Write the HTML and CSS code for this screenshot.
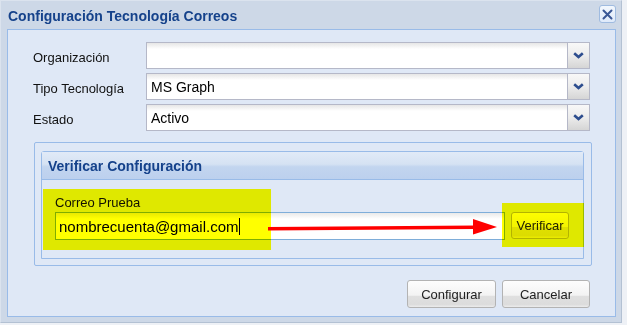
FILE: index.html
```html
<!DOCTYPE html>
<html lang="es">
<head>
<meta charset="utf-8">
<title>Configuración Tecnología Correos</title>
<link rel="stylesheet" href="styles.css">
</head>
<body>
<div class="window">
  <div class="titlebar">
    <span class="title">Configuración Tecnología Correos</span>
    <button class="close" aria-label="Cerrar">
      <svg width="11" height="11" viewBox="0 0 11 11"><path d="M1.5 1.5 L9.5 9.5 M9.5 1.5 L1.5 9.5" stroke="#3a5795" stroke-width="2" fill="none" stroke-linecap="round"/></svg>
    </button>
  </div>
  <div class="wbody">
    <div class="form">
      <label class="lbl">Organización</label>
      <div class="combo"><span class="val"></span><span class="trigger"><svg width="11" height="7" viewBox="0 0 11 7"><path d="M1.2 1.2 L5.5 5 L9.8 1.2" stroke="#2d4d8e" stroke-width="2.6" fill="none"/></svg></span></div>
      <label class="lbl">Tipo Tecnología</label>
      <div class="combo"><span class="val">MS Graph</span><span class="trigger"><svg width="11" height="7" viewBox="0 0 11 7"><path d="M1.2 1.2 L5.5 5 L9.8 1.2" stroke="#2d4d8e" stroke-width="2.6" fill="none"/></svg></span></div>
      <label class="lbl">Estado</label>
      <div class="combo"><span class="val">Activo</span><span class="trigger"><svg width="11" height="7" viewBox="0 0 11 7"><path d="M1.2 1.2 L5.5 5 L9.8 1.2" stroke="#2d4d8e" stroke-width="2.6" fill="none"/></svg></span></div>
    </div>
    <div class="fieldset">
      <div class="panel">
        <div class="phead">Verificar Configuración</div>
        <div class="pbody">
          <div class="plabel">Correo Prueba</div>
          <div class="emailrow">
            <div class="email">nombrecuenta@gmail.com<span class="caret"></span></div>
            <button class="btn verify">Verificar</button>
          </div>
        </div>
      </div>
    </div>
    <div class="footer">
      <button class="btn wide1">Configurar</button>
      <button class="btn wide2">Cancelar</button>
    </div>
  </div>
</div>
<div class="hl hl1"></div>
<div class="hl hl2"></div>
<svg class="arrow" width="627" height="325" viewBox="0 0 627 325">
  <line x1="268" y1="228.8" x2="476" y2="227.2" stroke="#ff0000" stroke-width="3.5"/>
  <polygon points="473,219 497,227 473,234.5" fill="#ff0000"/>
</svg>
</body>
</html>
```
FILE: styles.css
```css
* { box-sizing: border-box; }

body {
  margin: 0;
  width: 627px;
  height: 325px;
  overflow: hidden;
  position: relative;
  background: #eef1f6;
  font-family: "Liberation Sans", Arial, sans-serif;
}

.window {
  width: 622px;
  height: 323px;
  background: #cdd8e7;
  border: 1px solid #b3c1d3;
  border-top-color: #dbe3ee;
  border-left-color: #dbe3ee;
  padding: 0 5px 5px 6px;
  display: flex;
  flex-direction: column;
}

.titlebar {
  height: 28px;
  display: flex;
  align-items: center;
  padding-left: 1px;
}

.title {
  font-weight: bold;
  font-size: 14px;
  color: #15428b;
  line-height: 16px;
  margin-top: 1px;
}

.close {
  margin-left: auto;
  align-self: flex-start;
  margin-top: 4px;
  width: 17px;
  height: 18px;
  padding: 0;
  border: 1px solid #9fbbe0;
  border-radius: 3px;
  background: linear-gradient(#f2f7fd, #dfeafa);
  display: flex;
  align-items: center;
  justify-content: center;
}

.wbody {
  height: 288px;
  border: 1px solid #99bbe8;
  background: #dfe8f6;
  padding: 12px 25px 0 25px;
}

.form {
  display: grid;
  grid-template-columns: 113px 1fr;
  row-gap: 4px;
}

.lbl {
  font-size: 13px;
  color: #111;
  display: flex;
  align-items: center;
  padding-top: 4px;
}

.combo {
  height: 27px;
  border: 1px solid #b5b8c8;
  background: linear-gradient(#e6e6e6, #ffffff 6px);
  display: flex;
  align-items: center;
}

.val {
  flex: 1;
  font-size: 14px;
  color: #000;
  padding-left: 4px;
}

.trigger {
  width: 22px;
  height: 100%;
  border-left: 1px solid #b5b8c8;
  background: linear-gradient(#f8f8f8, #ececec 50%, #d5d5d5);
  display: flex;
  align-items: center;
  justify-content: center;
}

.fieldset {
  margin: 11px 0 0 1px;
  width: 558px;
  height: 124px;
  border: 1px solid #99bbe8;
  border-radius: 2px;
  padding: 8px 7px 6px 6px;
}

.panel {
  height: 108px;
  border: 1px solid #99bbe8;
  border-radius: 3px 3px 0 0;
  display: flex;
  flex-direction: column;
}

.phead {
  height: 28px;
  border-bottom: 1px solid #99bbe8;
  background: linear-gradient(#e1eaf7, #d5e2f3 45%, #c2d5ef 55%, #bcd0ee);
  font-weight: bold;
  font-size: 14px;
  color: #15428b;
  padding-left: 6px;
  display: flex;
  align-items: center;
}

.pbody {
  flex: 1;
  padding: 14px 0 0 13px;
}

.plabel {
  font-size: 13px;
  color: #111;
  line-height: 17px;
  margin-bottom: 1px;
}

.emailrow {
  display: flex;
  align-items: flex-start;
  gap: 6px;
}

.email {
  width: 450px;
  height: 28px;
  border: 1px solid #7eadd9;
  background: linear-gradient(#e9e9e9, #ffffff 6px);
  font-size: 15px;
  color: #000;
  padding-left: 3px;
  display: flex;
  align-items: center;
}

.caret {
  display: inline-block;
  width: 1px;
  height: 17px;
  background: #000;
  margin-left: 1px;
}

.btn {
  font-family: "Liberation Sans", Arial, sans-serif;
  font-size: 13px;
  color: #222;
  height: 28px;
  padding: 0;
  border: 1px solid #b3b3b3;
  border-radius: 3px;
  background: linear-gradient(#fdfdfd, #f3f3f3 55%, #e0e0e0 58%, #dcdcdc 90%, #ececec);
}

.verify {
  width: 58px;
  height: 27px;
}

.footer {
  margin-top: 14px;
  display: flex;
  justify-content: flex-end;
  gap: 6px;
}

.wide1 { width: 89px; }
.wide2 { width: 88px; }

.hl {
  position: absolute;
  background: #ffff00;
  mix-blend-mode: multiply;
}

.hl1 { left: 43px; top: 189px; width: 228px; height: 61px; }
.hl2 { left: 502px; top: 203px; width: 82px; height: 44px; }

.arrow {
  position: absolute;
  left: 0;
  top: 0;
  pointer-events: none;
}
```
